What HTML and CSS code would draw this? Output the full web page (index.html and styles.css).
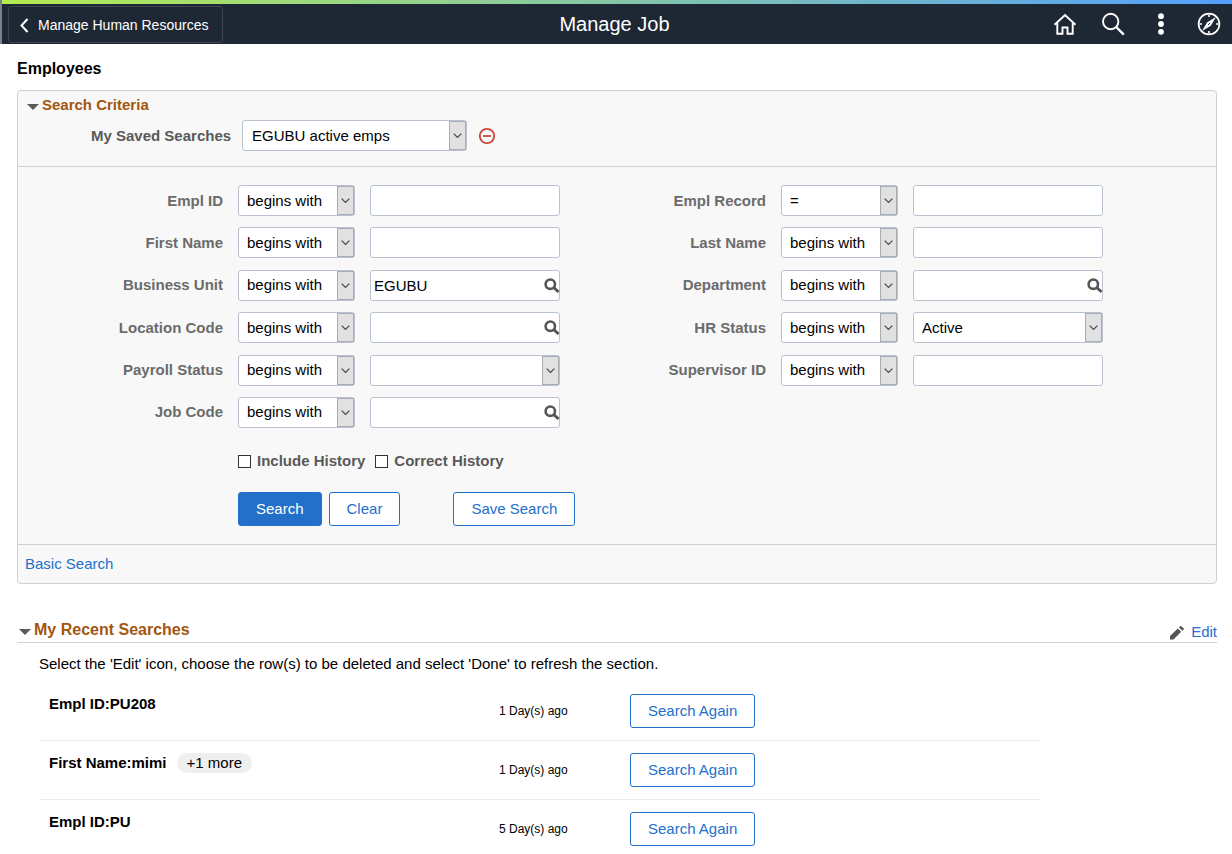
FILE: index.html
```html
<!DOCTYPE html>
<html lang="en">
<head>
<meta charset="utf-8">
<title>Manage Job</title>
<link rel="stylesheet" href="styles.css">
</head>
<body>
<svg class="sprite" aria-hidden="true">
  <symbol id="chev" viewBox="0 0 16 28"><path d="M3.500 12l4 4 4-4" fill="none" stroke="#444" stroke-width="1.2"/></symbol>
  <symbol id="lens" viewBox="0 0 16 16"><circle cx="6.300" cy="6.200" r="4.700" fill="none" stroke="#555" stroke-width="2.600"/><path d="M9.800 9.600l4.800 4.400" stroke="#555" stroke-width="2.800"/></symbol>
  <symbol id="tri" viewBox="0 0 12 6"><path d="M0 0h12L6 6z" fill="#5a5a5a"/></symbol>
</svg>
<header class="banner">
  <nav class="banner-left">
    <button class="back" type="button">
      <svg width="10" height="16" viewBox="0 0 10 16"><path d="M8.500 2L2.500 8.500l6 6.500" fill="none" stroke="#fff" stroke-width="2"/></svg>
      Manage Human Resources
    </button>
  </nav>
  <h1 class="banner-title">Manage Job</h1>
  <div class="banner-tools">
    <button class="tool" type="button" aria-label="Home"><svg width="24" height="24" viewBox="0 0 24 24" fill="none" stroke="#fff" stroke-width="1.900"><path d="M1.500 12.800L12 3l10.500 9.800M4.300 11V21.800h5.200v-6.300h5v6.300h5.200V11"/></svg></button>
    <button class="tool" type="button" aria-label="Search"><svg width="24" height="24" viewBox="0 0 24 24" fill="none" stroke="#fff"><circle cx="9.700" cy="9.500" r="7.700" stroke-width="1.900"/><path d="M15.200 15l7.600 7.600" stroke-width="2.400"/></svg></button>
    <button class="tool" type="button" aria-label="Actions"><svg width="24" height="24" viewBox="0 0 24 24" fill="#fff"><circle cx="12" cy="4.200" r="2.900"/><circle cx="12" cy="12" r="2.900"/><circle cx="12" cy="19.800" r="2.900"/></svg></button>
    <button class="tool" type="button" aria-label="Navigator"><svg width="24" height="24" viewBox="0 0 24 24"><circle cx="12" cy="12" r="10.400" fill="none" stroke="#fff" stroke-width="1.700"/><path d="M19 5L13.800 13.800 5 19 10.200 10.200z" fill="#fff"/><path d="M11 13l2-2" stroke="#1e2834" stroke-width="1"/><path d="M12 2.500v2.500M12 19v2.500M2.500 12H5M19 12h2.500" stroke="#fff" stroke-width="1.600"/></svg></button>
  </div>
</header>

<main class="page">
  <h2 class="page-title">Employees</h2>

  <form class="panel">
    <section class="criteria">
      <h3 class="section-title"><svg class="tri" width="12" height="6"><use href="#tri"/></svg>Search Criteria</h3>
      <div class="saved">
        <label class="label dark" for="saved">My Saved Searches</label>
        <span class="pick saved-pick"><select id="saved"><option>EGUBU active emps</option></select><span class="drop"><svg><use href="#chev"/></svg></span></span>
        <button class="remove" type="button" aria-label="Delete saved search"><svg width="18" height="18" viewBox="0 0 18 18" fill="none" stroke="#cb4337" stroke-width="1.800"><circle cx="9" cy="9" r="7.200"/><path d="M5 9h8"/></svg></button>
      </div>
    </section>

    <section class="filters">
      <div class="grid">
        <label class="label" for="empl">Empl ID</label>
        <span class="pick"><select aria-label="Empl ID operator"><option>begins with</option></select><span class="drop"><svg><use href="#chev"/></svg></span></span>
        <span class="entry"><input id="empl" type="text"></span>
        <label class="label" for="rec">Empl Record</label>
        <span class="pick"><select aria-label="Empl Record operator"><option>=</option></select><span class="drop"><svg><use href="#chev"/></svg></span></span>
        <span class="entry"><input id="rec" type="text"></span>

        <label class="label" for="first">First Name</label>
        <span class="pick"><select aria-label="First Name operator"><option>begins with</option></select><span class="drop"><svg><use href="#chev"/></svg></span></span>
        <span class="entry"><input id="first" type="text"></span>
        <label class="label" for="last">Last Name</label>
        <span class="pick"><select aria-label="Last Name operator"><option>begins with</option></select><span class="drop"><svg><use href="#chev"/></svg></span></span>
        <span class="entry"><input id="last" type="text"></span>

        <label class="label" for="unit">Business Unit</label>
        <span class="pick"><select aria-label="Business Unit operator"><option>begins with</option></select><span class="drop"><svg><use href="#chev"/></svg></span></span>
        <span class="entry"><input id="unit" type="text" value="EGUBU"><button class="lookup" type="button" aria-label="Look up Business Unit"><svg width="16" height="16"><use href="#lens"/></svg></button></span>
        <label class="label" for="dept">Department</label>
        <span class="pick"><select aria-label="Department operator"><option>begins with</option></select><span class="drop"><svg><use href="#chev"/></svg></span></span>
        <span class="entry"><input id="dept" type="text"><button class="lookup" type="button" aria-label="Look up Department"><svg width="16" height="16"><use href="#lens"/></svg></button></span>

        <label class="label" for="loc">Location Code</label>
        <span class="pick"><select aria-label="Location Code operator"><option>begins with</option></select><span class="drop"><svg><use href="#chev"/></svg></span></span>
        <span class="entry"><input id="loc" type="text"><button class="lookup" type="button" aria-label="Look up Location Code"><svg width="16" height="16"><use href="#lens"/></svg></button></span>
        <label class="label" for="hr">HR Status</label>
        <span class="pick"><select aria-label="HR Status operator"><option>begins with</option></select><span class="drop"><svg><use href="#chev"/></svg></span></span>
        <span class="pick"><select id="hr"><option>Active</option></select><span class="drop"><svg><use href="#chev"/></svg></span></span>

        <label class="label" for="pay">Payroll Status</label>
        <span class="pick"><select aria-label="Payroll Status operator"><option>begins with</option></select><span class="drop"><svg><use href="#chev"/></svg></span></span>
        <span class="pick"><select id="pay"><option></option></select><span class="drop"><svg><use href="#chev"/></svg></span></span>
        <label class="label" for="sup">Supervisor ID</label>
        <span class="pick"><select aria-label="Supervisor ID operator"><option>begins with</option></select><span class="drop"><svg><use href="#chev"/></svg></span></span>
        <span class="entry"><input id="sup" type="text"></span>

        <label class="label" for="job">Job Code</label>
        <span class="pick"><select aria-label="Job Code operator"><option>begins with</option></select><span class="drop"><svg><use href="#chev"/></svg></span></span>
        <span class="entry"><input id="job" type="text"><button class="lookup" type="button" aria-label="Look up Job Code"><svg width="16" height="16"><use href="#lens"/></svg></button></span>
      </div>
      <div class="checks">
        <label class="check"><input type="checkbox">Include History</label>
        <label class="check"><input type="checkbox">Correct History</label>
      </div>
      <div class="actions">
        <button class="btn primary" type="button">Search</button>
        <button class="btn" type="button">Clear</button>
        <button class="btn save" type="button">Save Search</button>
      </div>
    </section>

    <div class="panel-foot"><a href="#">Basic Search</a></div>
  </form>

  <section class="recent">
    <div class="recent-head">
      <h3 class="recent-title"><svg class="tri" width="12" height="6"><use href="#tri"/></svg>My Recent Searches</h3>
      <a class="edit" href="#"><svg width="16" height="16" viewBox="0 0 16 16" fill="#555"><path d="M1 15.500V12L8.800 4.500l3.400 3.200L4.500 15.500zM10 3.500l1.800-1.800L15.200 5l-1.800 1.700z"/></svg>Edit</a>
    </div>
    <p class="hint">Select the 'Edit' icon, choose the row(s) to be deleted and select 'Done' to refresh the section.</p>
    <ul class="rows">
      <li class="row"><div class="name">Empl ID:PU208</div><div class="age">1 Day(s) ago</div><button class="btn again" type="button">Search Again</button></li>
      <li class="row"><div class="name">First Name:mimi<span class="more">+1 more</span></div><div class="age">1 Day(s) ago</div><button class="btn again" type="button">Search Again</button></li>
      <li class="row"><div class="name">Empl ID:PU</div><div class="age">5 Day(s) ago</div><button class="btn again" type="button">Search Again</button></li>
    </ul>
  </section>
</main>
</body>
</html>
```

FILE: styles.css
```css
* { box-sizing: border-box; }

body {
  margin: 0;
  background: #fff;
  color: #000;
  font: 15px/20px "Liberation Sans", Arial, sans-serif;
}

h1, h2, h3, p, ul { margin: 0; padding: 0; }
button, input, select { font: inherit; color: inherit; }
button { cursor: pointer; }
svg { display: block; flex: none; }
a { color: #2370cb; text-decoration: none; }
.sprite { display: none; }

/* Banner */
.banner {
  display: grid;
  grid-template-columns: 1fr auto 1fr;
  align-items: center;
  height: 44px;
  padding: 4px 11px 0 6px;
  border-left: 2px solid #7d828a;
  background:
    linear-gradient(90deg, #b5ec51, #53a0fd) 0 0 / 100% 4px no-repeat,
    #1e2834;
  color: #fff;
}
.banner-left { display: flex; }
.back {
  display: flex;
  align-items: center;
  gap: 9px;
  height: 37px;
  padding: 1px 14px 0 10px;
  border: 1px solid #3c4550;
  border-radius: 3px;
  background: none;
  font-size: 14px;
}
.banner-title { font-size: 20px; font-weight: 400; }
.banner-tools { display: flex; justify-content: flex-end; gap: 24px; }
.tool { padding: 0; border: 0; background: none; }

/* Page */
.page { padding: 15px 15px 8px 17px; }
.page-title { font-size: 16px; line-height: 20px; }

.panel {
  margin-top: 11px;
  border: 1px solid #cbd1d9;
  border-radius: 4px;
  background: #f8f8f8;
}
.criteria { padding: 4px 9px 15px; border-bottom: 1px solid #cbd1d9; }
.section-title, .recent-title {
  display: flex;
  align-items: center;
  gap: 3px;
  color: #a3560f;
}
.section-title { font-size: 15px; }
.recent-title { font-size: 16px; }
.tri { margin-top: 3px; }
.saved { display: flex; align-items: center; margin: 5px 0 0 64px; }
.saved-pick { width: 225px; margin: 0 11px; }
.remove { padding: 0; border: 0; background: none; }

.label { color: #6b6b6b; font-weight: 700; text-align: right; }
.dark { color: #595959; }

/* Controls */
.pick, .entry { position: relative; display: block; height: 31px; }
.pick select, .entry input {
  width: 100%;
  height: 100%;
  border: 1px solid #b9c3cf;
  border-radius: 3px;
  background: #fff;
}
.pick select { appearance: none; padding: 0 24px 0 8px; }
.saved-pick select { padding-left: 9px; }
.entry input { padding: 0 20px 0 3px; }
.drop {
  position: absolute;
  inset: 1px 1px 1px auto;
  width: 17px;
  border: 1px solid #a9acb0;
  background: #e1e1e1;
  pointer-events: none;
}
.drop svg { width: 16px; height: 27px; }
.lookup {
  position: absolute;
  top: 8px;
  right: 0;
  padding: 0;
  border: 0;
  background: none;
}

/* Filters */
.filters { padding: 18px 0; border-bottom: 1px solid #cbd1d9; }
.grid {
  display: grid;
  grid-template-columns: 205fr 117fr 190fr 191fr 117fr 190fr 98fr;
  column-gap: 15px;
  align-content: space-between;
  align-items: center;
  min-height: 243px;
}
.grid > :nth-child(6n + 1) { grid-column-start: 1; }
.checks, .actions { display: flex; margin-left: 220px; }
.checks { gap: 10px; margin-top: 23px; }
.check {
  display: flex;
  align-items: center;
  gap: 6px;
  color: #595959;
  font-weight: 700;
}
.check input {
  appearance: none;
  width: 13px;
  height: 13px;
  margin: 0;
  border: 1px solid #333;
  background: #fff;
}
.actions { gap: 7px; margin-top: 21px; }
.btn {
  height: 34px;
  padding: 0 17px;
  border: 1px solid #2370cb;
  border-radius: 3px;
  background: #fff;
  color: #2370cb;
}
.primary { background: #2370cb; color: #fff; }
.save { margin-left: 46px; }
.panel-foot { padding: 9px 7px; }

/* Recent searches */
.recent { margin-top: 36px; }
.recent-head {
  display: flex;
  justify-content: space-between;
  border-bottom: 1px solid #cbd1d9;
  padding: 0 0 2px 2px;
}
.edit { display: flex; align-items: center; gap: 6px; padding-top: 2px; margin-bottom: -2px; }
.hint { margin: 11px 22px 0; }
.rows { width: 1001px; max-width: 100%; margin: 8px 0 0 22px; list-style: none; }
.row {
  display: grid;
  grid-template-columns: 450fr 131fr 410fr;
  align-items: center;
  justify-items: start;
  padding: 12px 0 12px 10px;
  border-bottom: 1px solid #ececec;
}
.row:last-child { border-bottom: 0; }
.name { display: flex; align-self: start; font-weight: 700; }
.more {
  margin-left: 10px;
  padding: 0 10px;
  border-radius: 10px;
  background: #efefef;
  font-weight: 400;
}
.age { font-size: 12px; }
```
